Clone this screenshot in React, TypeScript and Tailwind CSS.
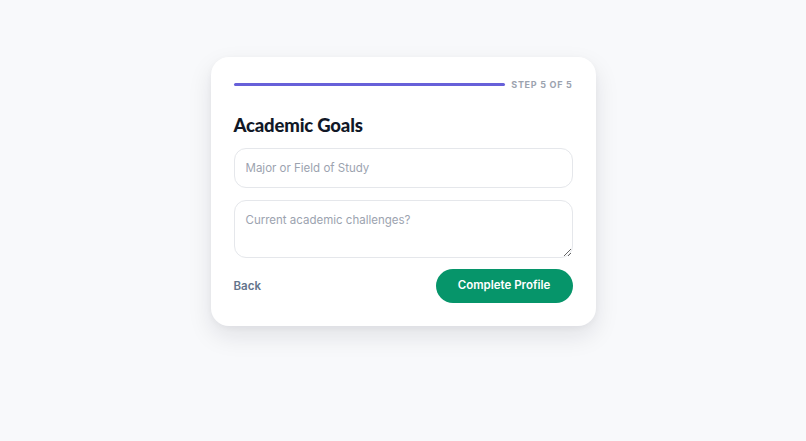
import React from "react";

export default function App() {
  return (
    <div className="min-h-screen w-full bg-[#f8f9fb] pt-[57px]" style={{ fontFamily: "Inter, 'Liberation Sans', sans-serif" }}>
      <div className="mx-auto w-[385px] rounded-[18px] bg-white px-[23px] pt-[23px] pb-[23px] shadow-[0_10px_24px_rgba(15,23,42,0.10),0_2px_6px_rgba(15,23,42,0.04)]">
        <div className="flex items-center gap-[6px]">
          <div className="h-[3px] flex-1 rounded-full bg-[#6760d9]" />
          <span className="text-[9px] font-bold tracking-[0.08em] text-[#9ca3af] leading-none">STEP 5 OF 5</span>
        </div>
        <h2 className="mt-[27px] text-[18.5px] font-black leading-none text-[#111827] tracking-[-0.01em]" style={{ fontFamily: "Lato, 'Noto Sans', sans-serif" }}>
          Academic Goals
        </h2>
        <div className="mt-[13px] flex flex-col gap-[12px]">
          <input
            className="h-[40px] w-full rounded-[12px] border border-[#e5e7eb] bg-white px-[11px] text-[11.5px] text-[#374151] placeholder:text-[#9ca3af] outline-none"
            placeholder="Major or Field of Study"
          />
          <textarea
            className="block h-[58px] w-full rounded-[12px] border border-[#e5e7eb] bg-white px-[11px] py-[12px] text-[11.5px] leading-[14px] text-[#374151] placeholder:text-[#9ca3af] outline-none"
            placeholder="Current academic challenges?"
          />
        </div>
        <div className="mt-[11px] flex items-center justify-between">
          <button className="pt-[2px] text-[11.5px] font-semibold text-[#64748b]">Back</button>
          <button className="h-[34px] w-[137px] rounded-full bg-[#06956a] text-[11.5px] font-semibold text-white">
            Complete Profile
          </button>
        </div>
      </div>
    </div>
  );
}
